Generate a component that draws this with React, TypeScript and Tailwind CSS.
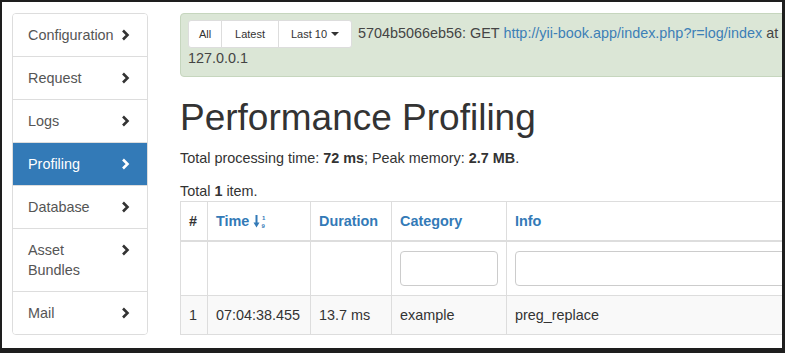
import type { ReactNode } from "react";

const navItems = [
  { label: "Configuration" },
  { label: "Request" },
  { label: "Logs" },
  { label: "Profiling", active: true },
  { label: "Database" },
  { label: "Asset Bundles", twoLine: true },
  { label: "Mail" },
];

function Chevron({ white }: { white?: boolean }) {
  return (
    <svg width="9" height="12" viewBox="0 0 9 12" className="shrink-0">
      <path
        d="M2 1.5 L6.5 6 L2 10.5"
        fill="none"
        stroke={white ? "#ffffff" : "#333333"}
        strokeWidth="2.6"
      />
    </svg>
  );
}

function SortIcon() {
  return (
    <svg width="13" height="15" viewBox="0 0 13 15" className="inline-block ml-[4px] -mt-[2px]">
      <rect x="2.5" y="1" width="2" height="9" fill="#337ab7" />
      <path d="M0.5 8.5 L6.5 8.5 L3.5 13.5 Z" fill="#337ab7" />
      <text x="9" y="6" fontSize="6" fontWeight="bold" fill="#337ab7" fontFamily="Liberation Sans, Arial, sans-serif">
        1
      </text>
      <text x="8.5" y="13.5" fontSize="6" fontWeight="bold" fill="#337ab7" fontFamily="Liberation Sans, Arial, sans-serif">
        9
      </text>
    </svg>
  );
}

function Th({ children, className = "" }: { children?: ReactNode; className?: string }) {
  return (
    <th
      className={`border border-[#ddd] border-b-2 px-[8px] py-[9px] text-left align-bottom font-bold leading-[20px] ${className}`}
    >
      {children}
    </th>
  );
}

export default function App() {
  return (
    <div className="w-[785px] h-[353px] overflow-hidden bg-white border-[#1e1e1e] border-t-[2px] border-l-[2px] border-r-[3px] border-b-[5px] font-['Liberation_Sans',Arial,sans-serif] text-[14.4px] text-[#333]">
      <div className="flex gap-[32px] pl-[10px] pt-[11px]">
        {/* sidebar */}
        <div className="w-[136px] shrink-0 rounded-[4px] border border-[#ddd] overflow-hidden">
          {navItems.map((item, idx) => (
            <div
              key={item.label}
              className={`flex justify-between pl-[15px] pr-[17px] leading-[20px] ${
                idx > 0 ? "border-t border-[#ddd]" : ""
              } ${item.twoLine ? "py-[11px] items-start" : "py-[11px] items-center"} ${
                item.active ? "bg-[#337ab7] text-white border-[#337ab7]" : "bg-white text-[#555]"
              }`}
            >
              <span className={item.twoLine ? "w-[70px]" : ""}>{item.label}</span>
              <span className={item.twoLine ? "pt-[4px]" : ""}>
                <Chevron white={item.active} />
              </span>
            </div>
          ))}
        </div>

        {/* main */}
        <div className="w-[700px] shrink-0">
          <div className="rounded-[4px] border border-[#c6d6be] bg-[#dbe6d6] px-[7px] pt-[6px] pb-[8px]">
            <div className="flex items-center gap-[6px] whitespace-nowrap">
              <div className="flex h-[28px] text-[11px] text-[#333]">
                <span className="flex w-[34px] items-center justify-center rounded-l-[3px] border border-[#ddd] bg-white">
                  All
                </span>
                <span className="flex w-[57px] items-center justify-center border border-l-0 border-[#ddd] bg-white">
                  Latest
                </span>
                <span className="flex w-[73px] items-center justify-center gap-[4px] rounded-r-[3px] border border-l-0 border-[#ddd] bg-white">
                  Last 10
                  <span className="inline-block h-0 w-0 border-x-[4px] border-t-[4px] border-x-transparent border-t-[#333]" />
                </span>
              </div>
              <span className="text-[#444]">
                5704b5066eb56: GET{" "}
                <span className="text-[#3d7fb6]">http://yii-book.app/index.php?r=log/index</span> at
              </span>
            </div>
            <div className="leading-[20px] text-[#444]">127.0.0.1</div>
          </div>

          <h1 className="mt-[21px] text-[37px] leading-[40px] font-normal text-[#333]">
            Performance Profiling
          </h1>

          <p className="mt-[10px] leading-[20px]">
            Total processing time: <b>72 ms</b>; Peak memory: <b>2.7 MB</b>.
          </p>

          <div className="mt-[13px] leading-[20px]">
            Total <b>1</b> item.
          </div>

          <table className="w-[700px] table-fixed border-collapse border border-[#ddd]">
            <colgroup>
              <col className="w-[27px]" />
              <col className="w-[103px]" />
              <col className="w-[81px]" />
              <col className="w-[115px]" />
              <col />
            </colgroup>
            <thead>
              <tr>
                <Th>#</Th>
                <Th className="text-[#337ab7]">
                  Time
                  <SortIcon />
                </Th>
                <Th className="text-[#337ab7]">Duration</Th>
                <Th className="text-[#337ab7]">Category</Th>
                <Th className="text-[#337ab7]">Info</Th>
              </tr>
              <tr>
                <td className="border border-[#ddd] px-[8px] py-[9px]" />
                <td className="border border-[#ddd] px-[8px] py-[9px]" />
                <td className="border border-[#ddd] px-[8px] py-[9px]" />
                <td className="border border-[#ddd] px-[8px] py-[9px]">
                  <input className="block h-[35px] w-full rounded-[4px] border border-[#ccc] bg-white" />
                </td>
                <td className="border border-[#ddd] px-[8px] py-[9px]">
                  <input className="block h-[35px] w-full rounded-[4px] border border-[#ccc] bg-white" />
                </td>
              </tr>
            </thead>
            <tbody>
              <tr className="bg-[#f9f9f9] leading-[20px]">
                <td className="border border-[#ddd] px-[8px] py-[9px]">1</td>
                <td className="border border-[#ddd] px-[8px] py-[9px]">07:04:38.455</td>
                <td className="border border-[#ddd] px-[8px] py-[9px]">13.7 ms</td>
                <td className="border border-[#ddd] px-[8px] py-[9px]">example</td>
                <td className="border border-[#ddd] px-[8px] py-[9px]">preg_replace</td>
              </tr>
            </tbody>
          </table>
        </div>
      </div>
    </div>
  );
}
